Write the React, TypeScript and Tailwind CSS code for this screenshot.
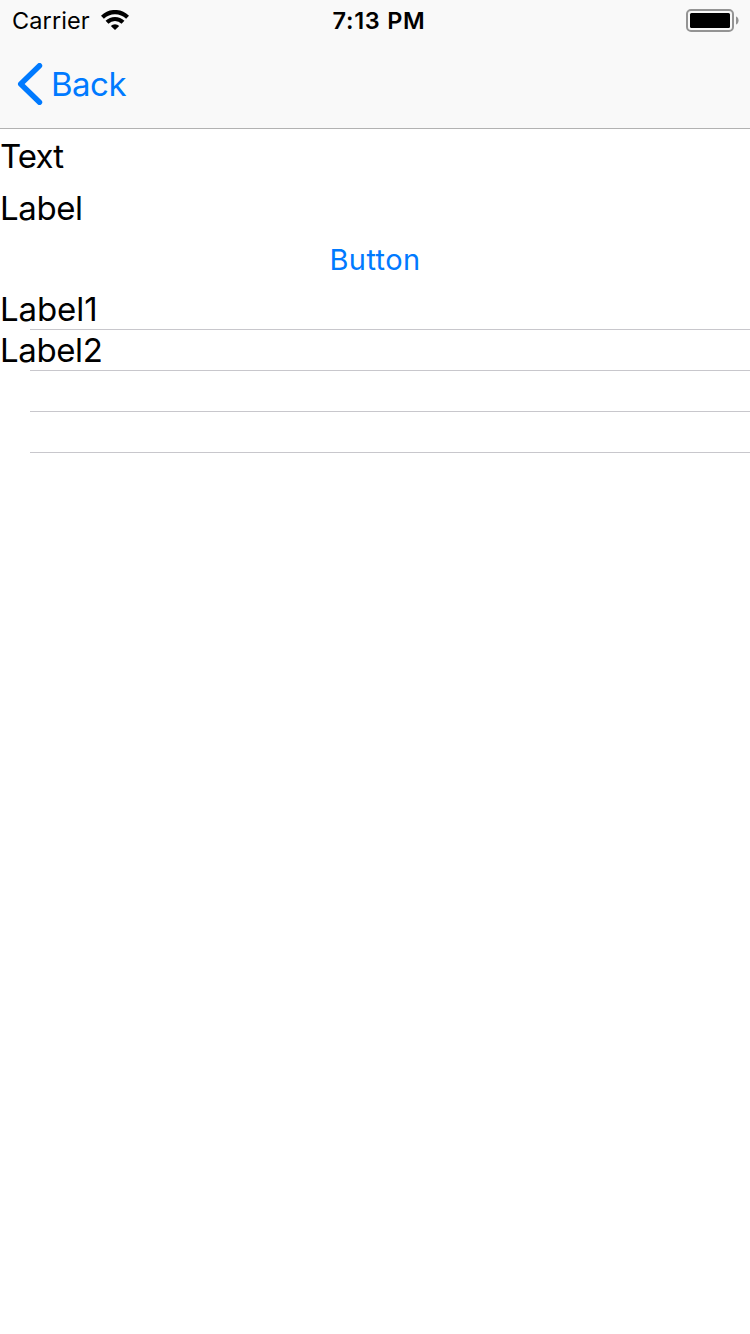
export default function App() {
  const rows = [
    { text: "Label1", spacing: "tracking-[-0.1px]" },
    { text: "Label2", spacing: "tracking-[-0.4px]" },
    { text: "", spacing: "" },
    { text: "", spacing: "" },
  ];
  return (
    <div className="flex h-[1334px] w-[750px] flex-col overflow-hidden bg-white font-['Inter',sans-serif] text-black">
      <header className="flex h-[129px] flex-col border-b border-[#b2b2b2] bg-[#f9f9f9]">
        <div className="grid h-10 grid-cols-3 items-center pr-[11px] pl-3">
          <div className="flex items-center gap-[11px]">
            <span className="pt-0.5 text-[23.5px] leading-[38px] tracking-[0.1px]">Carrier</span>
            <svg className="h-5 w-7" viewBox="0 0 28 20" fill="none" stroke="black" strokeWidth="4.2">
              <path d="M1.4 7.2C8.5 .3 19.5 .3 26.6 7.2" />
              <path d="M6 12.2c4.5-4.3 11.5-4.3 16 0" />
              <path d="M14 20l-4.2-4.1a6 6 0 0 1 8.4 0z" fill="black" stroke="none" />
            </svg>
          </div>
          <span className="pt-0.5 pl-[7px] text-center text-[23.5px] leading-[38px] font-semibold tracking-[0.7px]">7:13 PM</span>
          <svg className="h-6 w-[54px] justify-self-end" viewBox="0 0 54 24">
            <rect x="2" y="2" width="46" height="21" rx="4" fill="none" stroke="#949494" strokeWidth="2" />
            <rect x="5" y="5" width="40" height="15" rx="1.5" />
            <path d="M51 8.5c3.4 1 3.4 7 0 8z" fill="#949494" />
          </svg>
        </div>
        <button className="flex h-[88px] items-center gap-2 self-start pl-4 text-[#007aff]">
          <svg className="h-[42px] w-[27px]" viewBox="0 0 27 42" fill="none" stroke="currentColor" strokeWidth="5.4" strokeLinecap="round" strokeLinejoin="round">
            <path d="M23.5 2.7L4.7 21L23.5 39.3" />
          </svg>
          <span className="text-[33px] leading-10 tracking-[-0.5px]">Back</span>
        </button>
      </header>
      <main className="flex flex-col text-[33px]">
        <div className="h-[58px] leading-[54px] tracking-[-0.9px]">Text</div>
        <div className="h-[42px] leading-[42px] tracking-[-0.4px]">Label</div>
        <button className="h-[60px] pt-px text-center text-[29px] leading-[59px] tracking-[0.4px] text-[#007aff]">Button</button>
        <ul>
          {rows.map((row, i) => (
            <li key={i} className="h-[41px]">
              <div className={`h-10 leading-10 ${row.spacing}`}>{row.text}</div>
              <div className="ml-[30px] h-px bg-[#c8c7cc]" />
            </li>
          ))}
        </ul>
      </main>
    </div>
  );
}
